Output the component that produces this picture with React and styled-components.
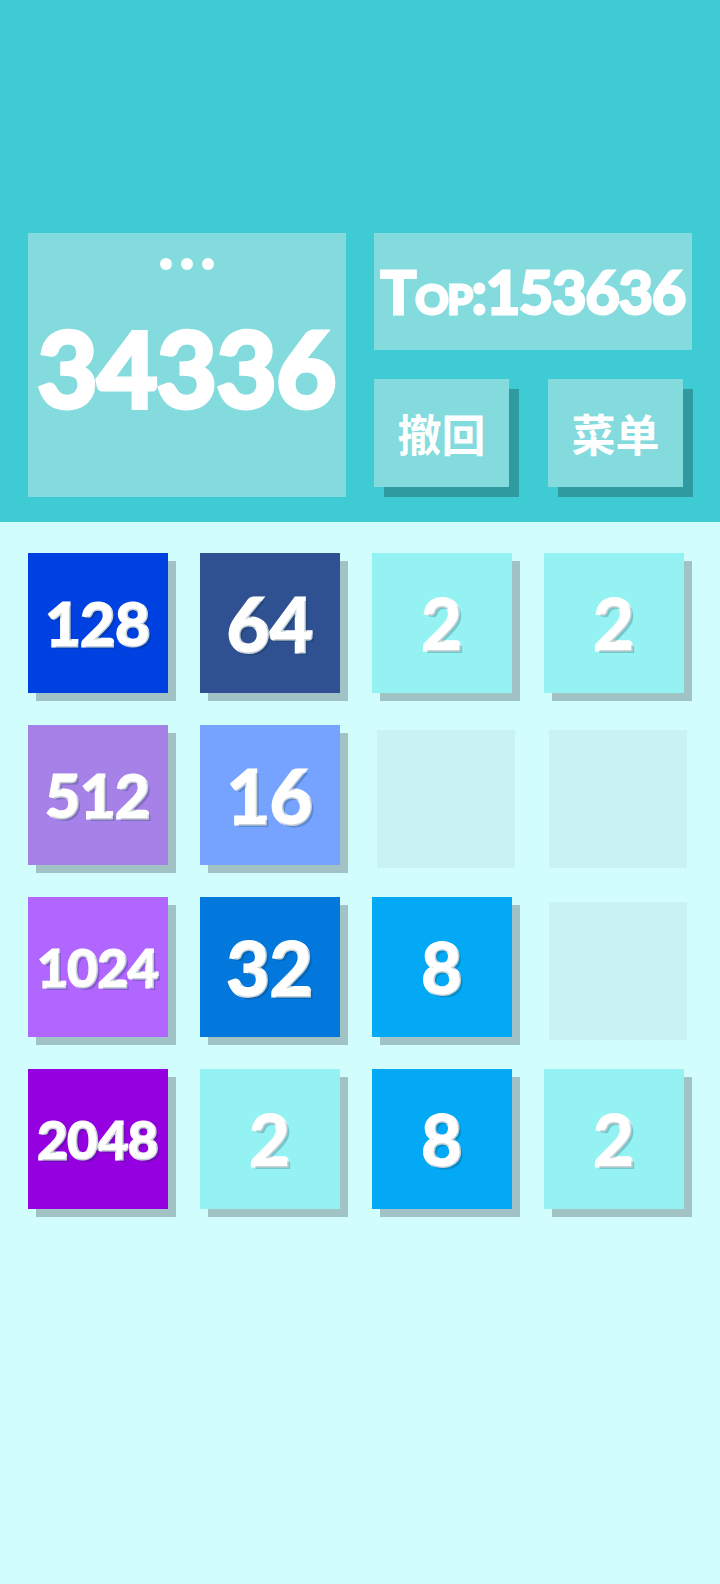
import React from "react";
import styled, { createGlobalStyle } from "styled-components";

const GlobalStyle = createGlobalStyle`
  html, body {
    margin: 0;
    padding: 0;
    background: #d1fefd;
  }
  body {
    font-family: "Lato", "Noto Sans", "Noto Sans CJK SC", sans-serif;
  }
`;

const Page = styled.div`
  min-height: 100vh;
  background: #d1fefd;
`;

const Header = styled.header`
  background: #3fcbd3;
  padding: 233px 28px 25px;
  display: grid;
  grid-template-columns: 318px 318px;
  column-gap: 28px;
`;

const ScorePanel = styled.div`
  background: #83dbdd;
  height: 264px;
  display: flex;
  flex-direction: column;
  align-items: center;
  color: #fff;
`;

const Dots = styled.div`
  display: flex;
  gap: 9px;
  margin-top: 25px;

  span {
    width: 12px;
    height: 12px;
    border-radius: 50%;
    background: #fff;
  }
`;

// heavy white numerals: bold face thickened with a stroke of the same colour
const Heavy = styled.div`
  font-weight: 700;
  -webkit-text-stroke: ${(p) => p.$stroke || 3}px #fff;
  paint-order: stroke fill;
`;

const Score = styled(Heavy)`
  font-size: 103px;
  line-height: 1;
  margin-top: 46px;
`;

const Side = styled.div`
  display: flex;
  flex-direction: column;
  gap: 29px;
`;

const BestPanel = styled(Heavy)`
  background: #83dbdd;
  height: 117px;
  display: flex;
  align-items: center;
  justify-content: center;
  color: #fff;
  font-size: 59px;
  font-variant: small-caps;
  letter-spacing: -1px;
`;

const Buttons = styled.div`
  display: flex;
  justify-content: space-between;
  padding-right: 9px;
`;

const ActionButton = styled.button`
  width: 135px;
  height: 108px;
  border: none;
  padding: 0;
  background: #83dbdd;
  box-shadow: 10px 10px 0 #2f9ba1;
  color: #fff;
  font-family: "Noto Sans CJK SC", sans-serif;
  font-weight: 700;
  font-size: 44px;
  cursor: pointer;
`;

const Board = styled.div`
  display: grid;
  grid-template-columns: repeat(4, 140px);
  grid-auto-rows: 140px;
  gap: 32px;
  padding: 31px 28px 0;
`;

const tileColors = {
  2: "#94f3f2",
  8: "#03a9f4",
  16: "#75a3ff",
  32: "#0278dd",
  64: "#2f5191",
  128: "#0041e1",
  512: "#a682e8",
  1024: "#b066ff",
  2048: "#9500e0",
};

const Tile = styled(Heavy)`
  background: ${(p) => tileColors[p.$value]};
  box-shadow: 8px 8px 0 #a2c3c5;
  display: flex;
  align-items: center;
  justify-content: center;
  color: #fff;
  font-size: ${(p) => p.$size}px;
  text-shadow: 3px 3px 0 rgba(0, 40, 60, 0.22);
`;

const EmptyCell = styled.div`
  width: 138px;
  height: 138px;
  margin: 5px 0 0 5px;
  background: #c9f3f2;
`;

const board = [
  [128, 64, 2, 2],
  [512, 16, 0, 0],
  [1024, 32, 8, 0],
  [2048, 2, 8, 2],
];

const sizeFor = (v) => {
  const len = String(v).length;
  if (len >= 4) return 52;
  if (len === 3) return 60;
  if (len === 2) return 74;
  return 70;
};

const App = () => {
  return (
    <Page>
      <GlobalStyle />
      <Header>
        <ScorePanel>
          <Dots>
            <span />
            <span />
            <span />
          </Dots>
          <Score $stroke={5}>34336</Score>
        </ScorePanel>
        <Side>
          <BestPanel $stroke={3}>Top:153636</BestPanel>
          <Buttons>
            <ActionButton>撤回</ActionButton>
            <ActionButton>菜单</ActionButton>
          </Buttons>
        </Side>
      </Header>
      <Board>
        {board.flat().map((v, i) =>
          v ? (
            <Tile key={i} $value={v} $size={sizeFor(v)} $stroke={3}>
              {v}
            </Tile>
          ) : (
            <EmptyCell key={i} />
          )
        )}
      </Board>
    </Page>
  );
};

export default App;
